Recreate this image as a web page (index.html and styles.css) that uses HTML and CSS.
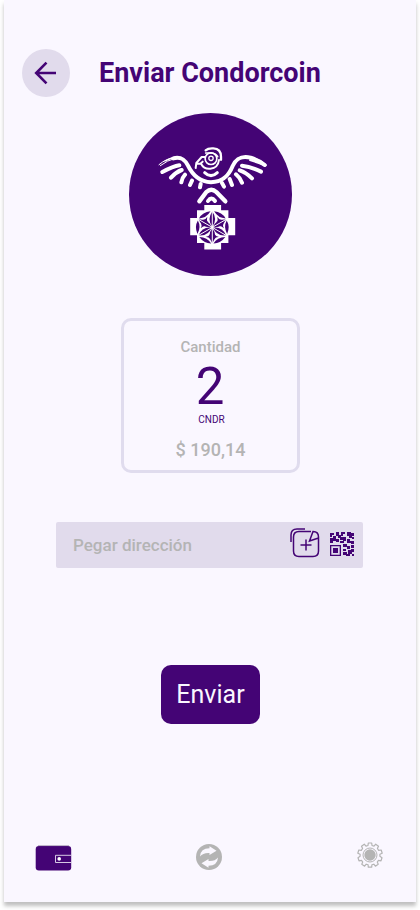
FILE: index.html
```html
<!DOCTYPE html>
<html lang="es">
<head>
<meta charset="utf-8">
<title>Enviar Condorcoin</title>
<link rel="stylesheet" href="styles.css">
</head>
<body>
<main class="screen">
  <header class="header">
    <button class="back" aria-label="Volver">
      <svg width="24" height="24" viewBox="0 0 24 24" fill="none" stroke="currentColor" stroke-width="2.6"><path d="M22 12H2M12.5 1.7 2.2 12 12.5 22.3"/></svg>
    </button>
    <h1 class="title">Enviar Condorcoin</h1>
  </header>

  <svg class="logo" viewBox="129 113 163 163">
    <circle cx="210.5" cy="194.5" r="81.5" fill="#440475"/>
    <g transform="translate(150 140) scale(.33333)" fill="none" stroke="#fff" stroke-linecap="round" stroke-linejoin="round">
      <path stroke-width="12" d="M70 55C92 49 104 58 114 77C126 102 145 125 183 127C222 125 238 103 248 78C260 53 276 47 302 53Q326 60 344 75"/>
      <path stroke-width="6" d="M278 51C302 47 330 60 347 76L300 60"/>
      <path stroke-width="3" d="M27 74Q48 56 75 51M31 77Q51 61 78 54"/>
      <path stroke-width="4" d="M45 63Q60 54 80 53"/>
      <path stroke-width="12" d="M88 76Q70 79 37 96M95 90Q78 96 63 113M105 104Q97 112 94 127M126 122L120 135M152 132L150 142M276 77Q302 80 333 95M269 91Q288 97 306 115M258 103Q270 113 276 128M239 117L246 135M216 129L222 140"/>
      <path stroke-width="6" d="M137 84L139 69L155 51H165M139 71H151L158 65M153 71Q162 88 181 86Q204 84 207 60"/>
      <circle cx="183" cy="56" r="17.5" stroke-width="5"/>
      <circle cx="183" cy="55" r="6.5" stroke-width="4"/>
      <path stroke-width="7" d="M167 31Q174 24 190 25Q213 26 213 50V59"/>
      <path stroke-width="5" d="M167 39H185Q198 40 203 50"/>
      <path stroke-width="9" d="M164 98Q183 116 202 98"/>
      <path stroke-width="13" d="M148 184L169 156Q184 142 199 156L226 184"/>
      <path stroke-width="12" d="M174 183Q184 168 195 183"/>
    </g>
    <path fill="#fff" d="M204.3 205h16.8v5.3h7.3v7.8h6.8v17.2h-6.8v7.8h-7.3v6.3h-16.8v-6.3H197v-7.8h-6.8v-17.2h6.8v-7.8h7.3z"/>
    <g transform="translate(212.3 227.4)" fill="#440475">
      <g id="pair"><path d="M0-15.8Q5.7-8 0-.8Q-5.7-8 0-15.8"/><path d="M0 .8Q5.7 8 0 15.8Q-5.7 8 0 .8"/></g>
      <g id="rim"><path d="M1.8-16.1Q9.8-15.2 13.3-9Q6-9.1 1.8-16.1M-1.8-16.1Q-9.8-15.2-13.3-9Q-6-9.1-1.8-16.1"/></g>
      <use href="#pair" transform="rotate(60)"/><use href="#pair" transform="rotate(-60)"/>
      <use href="#rim" transform="rotate(120)"/><use href="#rim" transform="rotate(240)"/>
      <path fill="none" stroke="#fff" stroke-width="1" d="M0-16V16M-13.8-8L13.8 8M-13.8 8L13.8-8"/>
      <g id="tri"><path d="M5-10.6Q6-8 9.6-7.5L4.5-4.3Q6-7.5 5-10.6"/><path d="M-5-10.6Q-6-8-9.6-7.5L-4.5-4.3Q-6-7.5-5-10.6"/></g>
      <use href="#tri" transform="rotate(120)"/><use href="#tri" transform="rotate(240)"/>
    </g>
  </svg>

  <section class="amount">
    <span class="label">Cantidad</span>
    <span class="value">2</span>
    <span class="unit">CNDR</span>
    <span class="fiat">$ 190,14</span>
  </section>

  <div class="address">
    <span class="placeholder">Pegar dirección</span>
    <svg class="paste" viewBox="290 528 30 30" fill="none" stroke="#440475" stroke-width="1.5">
      <path d="M291 542V535Q291 529 297 529H305"/>
      <path d="M311 531.5H299Q293.5 531.5 293.5 537V551Q293.5 556.5 299 556.5H313Q318.5 556.5 318.5 551V537Q318.5 531.5 313 531.5L309.5 541L318.5 538M306 539.5V550.5M300.5 545H311.5"/>
    </svg>
    <svg class="qr" viewBox="0 0 24 24" fill="#440475">
      <path fill-rule="evenodd" d="M0 13H11V24H0zM1.3 14.3V22.7H9.7V14.3z"/>
      <path d="M3 16h5v5H3zM0 1h4v2H2v2H0zM6 0h3v3h2v2h2v3h-3V6H8V4H6zM11 0h4v2h-2v2h-2zM0 6h3V4h3v3h3v3H6V9H3v2H0zM10 9h4v2h-4zM13 5h3v4h-3zM17 0h4v1h3v3h-2v2h-3V4h-2zM17 7h3v2h4v3h-3v-1h-4zM13 12h4v2h3v3h-3v-2h-4zM21 13h3v3h-3zM13 17h3v2h-3zM18 18h3v-1h3v3h-2v2h-4zM13 20h4v2h3v2h-4v-1h-3zM22 22h2v2h-2zM22 5h2v2h-2z"/>
    </svg>
  </div>

  <button class="send">Enviar</button>

  <nav class="tabs">
    <svg class="wallet" viewBox="35 845 37 26">
      <rect x="35.7" y="846" width="35.5" height="24.5" rx="3.2" fill="#440475"/>
      <path d="M38 845.6H69" stroke="#a79bb5" stroke-width=".8"/>
      <path d="M71.3 855.3H55.5V862.5H71.3" fill="none" stroke="#e7dff0" stroke-width=".9"/>
      <circle cx="59.2" cy="858.9" r="1.8" fill="#fff"/>
    </svg>
    <svg class="sync" viewBox="0 0 26 26">
      <circle cx="13" cy="13" r="13" fill="#b4b4b4"/>
      <path fill="#faf7ff" d="M4 12.5Q4.5 4.3 13.5 4.3V2.3L20.5 6.7L13.5 11V9Q7.2 8.5 4 12.5M22 13.5Q21.5 21.7 12.5 21.7V23.7L5.5 19.3L12.5 15V17Q18.8 17.5 22 13.5"/>
    </svg>
    <svg class="gear" viewBox="-13 -13 26 26" fill="none" stroke="#b4b4b4">
      <path stroke-width="1.2" stroke-linejoin="round" d="M-2-9.5L-1.7-12H1.7L2-9.5L4-8.9L5.7-10.8L8.5-8.8L7.4-6.5L8.7-4.7L11.2-5L12.2-1.8L9.9-.7V1.3L12 2.7L11 5.8L8.5 5.3L7.3 7L8.2 9.3L5.4 11.2L3.8 9.2L1.9 9.8L1.7 12.2H-1.7L-1.9 9.8L-3.8 9.2L-5.4 11.2L-8.2 9.3L-7.3 7L-8.5 5.3L-11 5.8L-12 2.7L-9.9 1.3V-.7L-12.2-1.8L-11.2-5L-8.7-4.7L-7.4-6.5L-8.5-8.8L-5.7-10.8L-4-8.9Z"/>
      <circle r="7" stroke-width="1"/>
      <circle r="5.7" fill="#b4b4b4" stroke="none"/>
    </svg>
  </nav>
</main>
</body>
</html>
```
FILE: styles.css
```css
* { box-sizing: border-box; }
body { margin: 0; min-height: 910px; background: #fff; font-family: Roboto, sans-serif; }
button { border: 0; padding: 0; font: inherit; }
svg { display: block; flex: none; }

.screen {
  width: 412px;
  height: 902px;
  margin: 0 4px;
  padding-top: 49px;
  display: flex;
  flex-direction: column;
  background: #faf7ff;
  box-shadow: 0 4px 4px rgba(0, 0, 0, .25);
}
.header { display: flex; align-items: center; height: 48px; padding-left: 18px; gap: 29px; }
.back {
  width: 48px;
  height: 48px;
  display: grid;
  place-items: center;
  border-radius: 50%;
  background: #e1dbec;
  color: #440475;
}
.title { margin: 0; font-size: 27px; line-height: 32px; font-weight: 700; color: #440475; white-space: nowrap; }
.logo { width: 163px; height: 163px; margin: 16px 0 0 125px; }

.amount {
  width: 179px;
  height: 155px;
  margin: 42px 0 0 117px;
  padding-top: 17px;
  display: flex;
  flex-direction: column;
  align-items: center;
  border: 3px solid #e0dcee;
  border-radius: 10px;
  color: #b4b4b4;
  font-weight: 500;
}
.label { font-size: 15px; line-height: 18px; }
.value { margin: 6px 1px 0 0; font-size: 51px; line-height: 50px; font-weight: 400; color: #440475; }
.unit { margin: 2px 0 0 2px; font-size: 10px; line-height: 12px; font-weight: 400; color: #440475; }
.fiat { margin-top: 13px; font-size: 18px; line-height: 21px; }

.address {
  width: 307px;
  height: 46px;
  margin: 49px 0 0 52px;
  padding: 0 9px 0 17px;
  display: flex;
  align-items: center;
  border-radius: 2px;
  background: #e1dbec;
}
.placeholder { flex: 1; font-size: 17px; font-weight: 500; color: #b4b4b4; }
.paste { width: 30px; height: 30px; margin: -4px 10px 0 0; }
.qr { width: 24px; height: 24px; margin-top: -2px; }

.send {
  width: 99px;
  height: 59px;
  margin: 97px 0 0 157px;
  border-radius: 10px;
  background: #440475;
  color: #faf7ff;
  font-size: 25px;
  font-weight: 400;
}
.tabs { display: flex; align-items: center; margin: 119px 33px 0 31px; justify-content: space-between; }
.wallet { width: 37px; height: 26px; margin-top: 2px; }
.sync { width: 26px; height: 26px; margin-right: 12px; }
.gear { width: 26px; height: 26px; margin-top: -4px; }
```
